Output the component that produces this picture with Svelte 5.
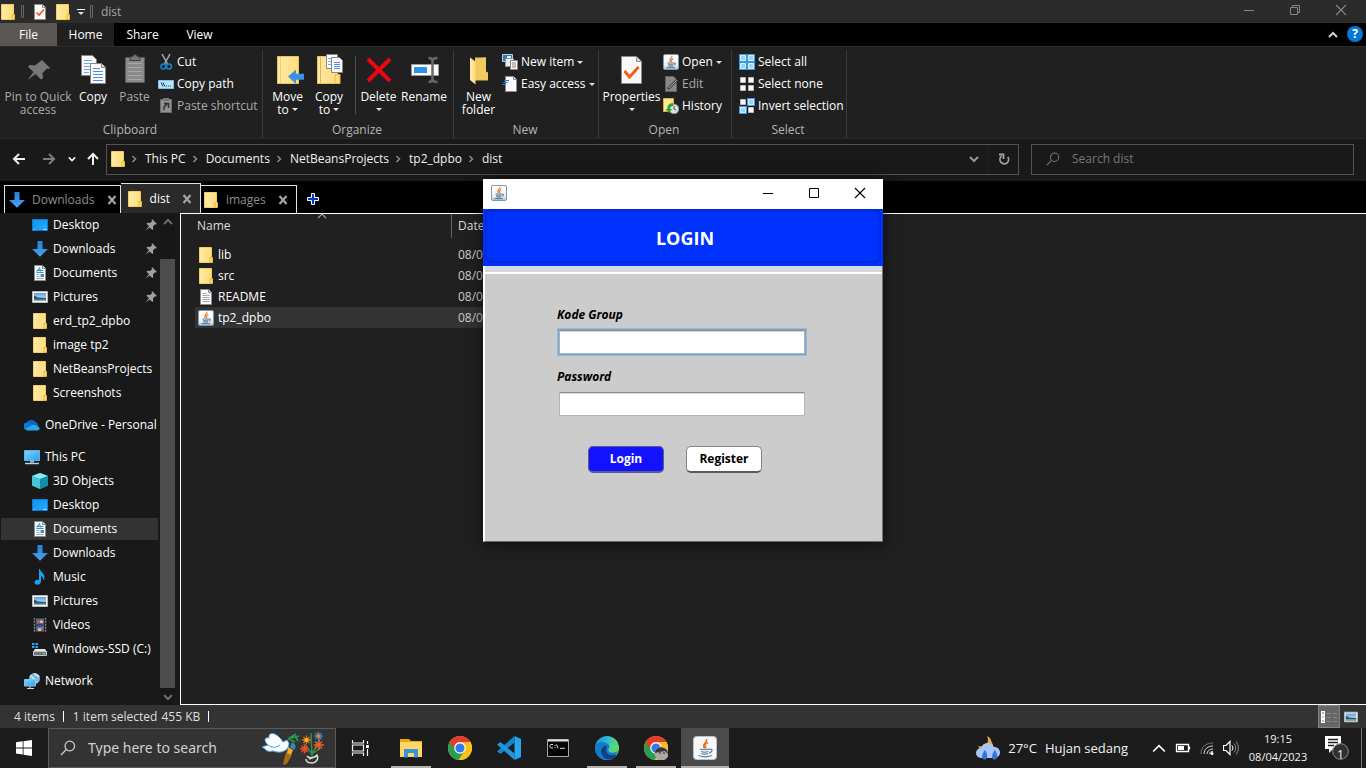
<script>
  const folder = '<path d="M1.5.5h12v15h-12z" fill="url(#gold)" stroke="#f3cf62"/><path d="M12 10.500h2.500v5H12z" fill="#ffdf7a" stroke="#e5b53a"/>';
  const docArt = '<path d="M2.500.5h8l3 3v12h-11z" fill="#fbfbfb" stroke="#8d8d8d"/><path d="M10.500.5v3h3" fill="#ddd" stroke="#8d8d8d"/>';
  const chromeArt = '<circle cx="12" cy="12" r="12" fill="#fbc116"/><path d="M12 12L1.600 6a12 12 0 0 0 9 17.900L17 14z" fill="#23a052"/><path d="M1.600 6a12 12 0 0 1 20.800 0H12a6 6 0 0 0-5.200 9z" fill="#e33b2e"/><path d="M12 6h10.400a12 12 0 0 1-11.800 17.900L17.200 15z" fill="#fbc116"/><circle cx="12" cy="12" r="5.800" fill="#fff"/><circle cx="12" cy="12" r="4.600" fill="#3279ea"/>';
  const javaArt = '<rect x=".5" y=".5" width="15" height="15" rx="1.500" fill="url(#steel)" stroke="#7f97ab"/><path d="M8.800 1.800c1.500 2.200-4 3-1.300 6M10.300 4.500C7.500 6 8.400 6.600 8.800 7.800" fill="none" stroke="#e8771f" stroke-width="1.100"/><path d="M4.500 9h6.500M11 9.300c2.500-.8 2 1.700 0 2M5 10.800h5.500M5.500 12h4.500M3.500 13.700h8.500" fill="none" stroke="#4a7396" stroke-width="1"/>';

  const icons = {
    folder: [16, folder],
    check: [16, docArt + '<path d="M4.500 8.500L7 11l5-5.500" fill="none" stroke="#f0581f" stroke-width="1.600"/>'],
    java: [16, javaArt],
    javaLarge: [24, '<rect x=".5" y=".5" width="23" height="23" rx="3" fill="#f7f7f7" stroke="#b5c4d0"/><path d="M13.500 3c1.500 3.500-5.500 4.500-2 9.500M15 6.500c-4.500 2-3 3.500-1.800 6" fill="none" stroke="#e8742a" stroke-width="1.500"/><path d="M7 13c2 1 7 1 9.500 0M16.500 13.500c3.500-1.500 3.500 2.500-.5 3.500M8 15.500c2 .8 5.500.8 7.500 0M8.500 17.500c2 .8 4.500.8 6.500 0M5.500 19.500c4 1.500 10 1.500 13.500 0" fill="none" stroke="#567d9f" stroke-width="1.200"/>'],
    down: [16, '<path d="M5.500 0h5v8H16l-8 7.700L0 8h5.500z" fill="url(#blueArrow)"/>'],
    desktop: [16, '<path d="M.5 2.500h15v11H.5z" fill="url(#desk)" stroke="#0d7fd3"/><path d="M1.500 12.500h1m9 0h3" stroke="#bfe4ff"/>'],
    document: [16, docArt + '<path d="M5 6.500l2.500-4 1 4M4.500 5.500h7M4.500 7.500h7" fill="none" stroke="#2196dc"/><path d="M4.500 9.500h3m-3 2h3m-3 2h7" stroke="#9aa6af"/><path d="M8.500 9h3.500v3H8.500z" fill="#3f91b9"/>'],
    pictures: [16, '<path d="M.5 2.500h15v11H.5z" fill="#f6f6f6" stroke="#b9b9b9"/><path d="M2 4h12v8H2z" fill="url(#sky)"/><path d="M2 6.500l4 2 8 .5v3H2z" fill="#2b5a60"/><path d="M2 10.500h12V12H2z" fill="#7fa7bd"/>'],
    onedrive: [16, '<path d="M3 12a3.400 3.400 0 0 1-.5-6.300A5.500 5.500 0 0 1 12 5.300a4 4 0 0 1 1 6.700z" fill="#0f62b8"/><path d="M2.500 5.700C6 5 8 7.500 10 8.500L3 13a3.500 3.500 0 0 1-.5-7.300z" fill="#0a78d4"/><path d="M1.500 11.500L9 7.800a8 8 0 0 1 6.500 3c.5 1.500-.7 2.700-2 2.700H3.500c-1 0-1.700-.8-2-2z" fill="#28a8ea"/>'],
    pc: [16, '<path d="M.5 1.500h15v10H.5z" fill="url(#screen)" stroke="#58b6e8"/><path d="M6 12h4v1.500H6z" fill="#a9c2d0"/><path d="M1 14.500h14" stroke="#c0d2dc" stroke-width="1.500"/>'],
    cube: [16, '<path d="M8 0l8 3v9.500L8 16l-8-3.500V3z" fill="#1ba7b9"/><path d="M8 0l8 3-8 3-8-3z" fill="#8beaf0"/><path d="M0 3l8 3v10l-8-3.500z" fill="#46c6d2"/><path d="M8 6l8-3v9.500L8 16z" fill="#118da5"/>'],
    music: [16, '<path d="M8 0c.5 3.500 5 4.500 4.500 8.500-.2 1.500-1 2.500-1.500 3 .5-3-.5-4-2-4.500V12c0 5-6.500 4.500-6.500 1.500C2.500 11 5 10.300 7 10.800V0z" fill="#18a0f4"/>'],
    video: [16, '<path d="M1 1h14v14H1z" fill="#2a2a2a"/><path d="M2.500 1v14M13.500 1v14" stroke="#9b9b9b" stroke-dasharray="1.500 1.500"/><path d="M4 1.500h8v6H4z" fill="#3f67ab"/><path d="M4 8.500h8v6H4z" fill="#4265b8"/><path d="M5 3h3v3H5z" fill="#dc513c"/><path d="M8 3.500h3v2.500H8zM6 11h3v3H6z" fill="#ebc343"/><path d="M9 10h2v3H9z" fill="#dc513c"/>'],
    drive: [16, '<path d="M0 2h2.500v2H0zM3.500 2H6v2H3.500zM0 5h2.500v2H0zM3.500 5H6v2H3.500z" fill="#18b1ee"/><path d="M3 8h10l2 3H1z" fill="#e4e6e7"/><path d="M1.500 10.500h13v4h-13z" fill="#70777b" stroke="#bfc5c8"/><path d="M11 12.500h2" stroke="#54f35d"/>'],
    network: [16, '<circle cx="10.500" cy="5.500" r="5.500" fill="#7fb8d8"/><path d="M6 3c3 0 2 2 4 3s2 3 1 4.500M11 0c-1 2 3 2 4 4" fill="none" stroke="#d7edf6" stroke-width="1.500"/><path d="M.5 6.500h11v6.500H.5z" fill="url(#screen)" stroke="#7bc9f2"/><path d="M3 15.500h7M6 13v2" stroke="#c4dae6"/>'],
    textfile: [16, docArt + '<path d="M4.500 4.500h4m-4 2h7m-7 2h7m-7 2h7m-7 2h7" stroke="#a7a7a7"/>'],
    pin: [12, '<path d="M7 0L12 5l-1 .6-1-.3-2 2.200.2 2.500-1 1L4.800 8.500.5 11.500 4 7.200 1.500 4.700l1-1L5 4l2.200-2.100L6.500 1z" fill="#9aa0a5"/>'],
    pinLarge: [32, '<path d="M19 5l8 8-1.500 1-1.500-.5-4.500 4.500.5 5-2 1.500-5.500-5.500-8 6 6-8L5 12l1.500-2 5.500.5L17 6.500z" transform="translate(1 1)" fill="#777"/>'],
    copy: [32, '<path d="M4.500 1.500h11l4 4v16h-15z" fill="#fafafa" stroke="#858585"/><path d="M7 6.500h8m-8 3h9m-9 3h9m-9 3h6m-6 3h5" stroke="#73a8ed"/><path d="M13.500 9.500h11l4 4v16h-15z" fill="#fafafa" stroke="#858585"/><path d="M24.500 9.500v4h4" fill="#ddd" stroke="#858585"/><path d="M16 14.500h7m-7 3h10m-10 3h10m-10 3h10m-10 3h10" stroke="#4b8fe8"/>'],
    paste: [32, '<path d="M6.500 3.500h19v25h-19z" fill="#8b8b8b" stroke="#5b5b5b"/><path d="M11 6.500V3l3-.5C14 0 18 0 18 2.500l3 .5v3.500z" fill="#767676" stroke="#3d3d3d"/><path d="M9 9.500h14m-14 4h14m-14 4h14m-14 4h14m-14 4h14" stroke="#a8a8a8"/>'],
    moveTo: [32, '<path d="M5.500 2.500h21v27h-21z" fill="url(#gold)" stroke="#e7c45f"/><path d="M8.500 3v26" stroke="#f2cd66"/><path d="M16 22.500l8-7v4.200h8v6h-8v4.300z" fill="#3892e6"/>'],
    copyTo: [32, '<path d="M4.500 2.500h20v27h-20z" fill="url(#gold)" stroke="#e7c45f"/><path d="M7.500 3v26M22 20.500h5v9h-5z" stroke="#e1ba4d" fill="#ffdf7a"/><path d="M13.500.5h11v14h-11z" fill="#fafafa" stroke="#888"/><path d="M15 4.500h6m-6 3h6m-6 3h6" stroke="#72a9ec"/><path d="M18.500 3.500h8l3 3v12h-11z" fill="#fafafa" stroke="#888"/><path d="M21 8.500h6m-6 2h6m-6 2h6m-6 2h6" stroke="#4b8fe8"/>'],
    remove: [32, '<path d="M5 5l22 22M27 5L5 27" stroke="#e90713" stroke-width="4"/>'],
    rename: [32, '<path d="M3.500 10.500h27v11h-27z" fill="#fbfbfb" stroke="#999"/><path d="M6 13h13v6H6z" fill="#2f91e8"/><path d="M20.500 4c3 0 4 1 4 3v18c0 2-1 3-4 3m9-24c-3 0-5 1-5 3m5 21c-3 0-5-1-5-3" fill="none" stroke="#686868" stroke-width="2.500"/>'],
    newFolder: [32, '<path d="M12 3.500h11v14l2 1v8H12z" fill="#e9bd51"/><path d="M12 4.500l9-1h2V18l2 1v6.500H12z" fill="#f0c95f"/><path d="M7 3.500l5.500 4v23L7 26z" fill="url(#gold)"/>'],
    properties: [32, '<path d="M5.500 2.500h15l5 5v22h-20z" fill="#f8f8f8" stroke="#8c8c8c"/><path d="M20.500 2.500v5h5" fill="#d4d4d4" stroke="#8c8c8c"/><path d="M8.500 17l5 6 9-10" fill="none" stroke="#f45b19" stroke-width="2.800"/>'],
    cut: [16, '<path d="M4 0l5.500 10M12 0L6.500 10" stroke="#a8adb1" stroke-width="1.500"/><circle cx="5.500" cy="12.500" r="2.500" fill="none" stroke="#1685ce" stroke-width="1.600"/><circle cx="11" cy="12.500" r="2.500" fill="none" stroke="#1685ce" stroke-width="1.600"/>'],
    path: [16, '<path d="M.5 4.500h15v8H.5z" fill="#b7e3fb" stroke="#83bfe7"/><path d="M3 6.500l2 4m0-4l2 4m1-.5h1m1 0h1m1 0h1" stroke="#203a50"/>'],
    shortcut: [16, '<path d="M2.500 1.500h11v13h-11z" fill="#909090" stroke="#6b6b6b"/><path d="M5 0h6v3H5z" fill="#777"/><path d="M6 12l0-3 3-3M6 5.500h4.500V10" fill="none" stroke="#303030" stroke-width="1.500"/>'],
    newItem: [16, '<path d="M.5.5h10v7H.5z" fill="#2f79a6" stroke="#bad4e3"/><path d="M5 2h4v3H5z" fill="#d6ecf6"/><path d="M3.500 4.500h8v8h-8z" fill="#e7eef3" stroke="#899"/><path d="M8.500 6.500h7v9h-7z" fill="#fafafa" stroke="#888"/><path d="M10 9h4m-4 2h4m-4 2h4" stroke="#a77"/>'],
    easy: [16, '<path d="M3.500.5h8l3 3v12h-11z" fill="#fbfbfb" stroke="#8d8d8d"/><path d="M11.500.5v3h3" fill="#ddd" stroke="#8d8d8d"/><path d="M2 4.500h5M1 6.500h4.500M0 8.500h4" stroke="#1f7ac9"/>'],
    edit: [16, '<path d="M2.500.5h8l3 3v12h-11z" fill="#888" stroke="#626262"/><path d="M5 13l9-9" stroke="#414141" stroke-width="2.500"/><path d="M6 12l8-8" stroke="#aaa"/>'],
    history: [16, '<path d="M.5.500h10v13H.5z" fill="url(#gold)" stroke="#d9af40"/><circle cx="11" cy="11" r="4.800" fill="#d9dddd" stroke="#899"/><path d="M11 8v3l2 1" fill="none" stroke="#555"/><path d="M10 5C6 5 4 8 4.500 11H2.500L6 15l3-4H7c0-2 1-3 3-3z" fill="#27a52f"/>'],
    all: [16, '<path d="M0 0h16v16H0z" fill="#3b98e1"/><path d="M1.500 1.500h5v5h-5zM9.500 1.500h5v5h-5zM1.500 9.500h5v5h-5zM9.500 9.500h5v5h-5z" fill="#9bd3fb" stroke="#d6efff"/>'],
    none: [16, '<path d="M1.500 1.500h5v5h-5zM9.500 1.500h5v5h-5zM1.500 9.500h5v5h-5zM9.500 9.500h5v5h-5z" fill="#fafafa" stroke="#bbb"/>'],
    invert: [16, '<path d="M8 0h8v8H8zM0 8h8v8H0z" fill="#3b98e1"/><path d="M1.500 1.500h5v5h-5zM9.500 9.500h5v5h-5z" fill="#fafafa" stroke="#bbb"/><path d="M9.500 1.500h5v5h-5zM1.500 9.500h5v5h-5z" fill="#9bd3fb" stroke="#d6efff"/>'],
    back: [14, '<path d="M13 7H2m5-5L2 7l5 5" fill="none" stroke="currentColor" stroke-width="2"/>'],
    forward: [14, '<path d="M1 7h11M7 2l5 5-5 5" fill="none" stroke="currentColor" stroke-width="2"/>'],
    up: [14, '<path d="M7 13V2M2 7l5-5 5 5" fill="none" stroke="currentColor" stroke-width="2"/>'],
    chevDown: [10, '<path d="M1 3l4 4 4-4" fill="none" stroke="currentColor" stroke-width="2"/>'],
    chevUp: [10, '<path d="M1 7l4-4 4 4" fill="none" stroke="currentColor" stroke-width="2"/>'],
    caretUp: [10, '<path d="M1 7l4-4 4 4" fill="none" stroke="currentColor" stroke-width="1.200"/>'],
    chevRight: [10, '<path d="M3.500 2l3 3-3 3" fill="none" stroke="#8b8b8b" stroke-width="1.500"/>'],
    refresh: [12, '<path d="M3.500 3.200a4.300 4.300 0 1 0 6.300.8M1 1.500h4.500V6" fill="none" stroke="#a0a0a0" stroke-width="1.800"/>'],
    search: [16, '<circle cx="9.800" cy="6" r="4.800" fill="none" stroke="currentColor" stroke-width="1.200"/><path d="M6.300 9.500L1 15" stroke="currentColor" stroke-width="1.200"/>'],
    cross: [10, '<path d="M1.500 1l7 8m0-8l-7 8" stroke="#a5a5a5" stroke-width="2.200"/>'],
    plus: [12, '<path d="M4.500.5h3v4h4v3h-4v4h-3v-4h-4v-3h4z" fill="#0c36c8" stroke="#fff"/>'],
    minimize: [12, '<path d="M1 6.500h10" stroke="currentColor"/>'],
    maximize: [12, '<path d="M1.500 1.500h9v9h-9z" fill="none" stroke="currentColor"/>'],
    restore: [12, '<path d="M1.500 3.500h7v7h-7zM3.500 3.500v-2h7v7h-2" fill="none" stroke="currentColor"/>'],
    close: [12, '<path d="M1 1l10 10M11 1L1 11" stroke="currentColor" stroke-width="1.100"/>'],
    details: [16, '<path d="M0 2h4v4H0zM0 6h4v4H0zM0 10h4v4H0z" fill="#fff"/><path d="M1.500 4h1" stroke="#333" stroke-width="1.500"/><path d="M1.500 8h1" stroke="#258ad6" stroke-width="1.500"/><path d="M1.500 12h1" stroke="#c52424" stroke-width="1.500"/><path d="M6 4.500h4m2 0h4m-10 4h4m2 0h4m-10 4h4m2 0h4" stroke="#8a8a8a"/>'],
    windows: [16, '<path d="M0 2.300L6.700 1.300v6.200H0zM7.500 1.200L16 0v7.500H7.500zM0 8.400h6.700v6.200L0 13.600zM7.500 8.400H16V16l-8.500-1.200z" fill="#fff"/>'],
    taskview: [18, '<path d="M1.500 1v3h11V1M1.500 17v-3h11v3M1.500 6v6h11V6zM16.500 2v3m0 5v7" fill="none" stroke="#f2f2f2" stroke-width="1.200"/><path d="M15 6h3v3h-3z" fill="#fff"/>'],
    explorer: [24, '<path d="M1 3h9l2 2h11v16H1z" fill="#e8a60f"/><path d="M1 6h22v15H1z" fill="#ffd765"/><path d="M5 13h14v8.500h-4V17H9v4.500H5z" fill="#3994df"/>'],
    chrome: [24, chromeArt],
    chromeProfile: [24, chromeArt + '<circle cx="17.500" cy="17.500" r="7" fill="#aaa8a5"/><path d="M11 17c0-8 13-7 13 1l-3-3-6 1z" fill="#3a3533"/><path d="M15.500 17h1m3 0h1" stroke="#222" stroke-width="2"/>'],
    code: [24, '<path d="M17.500 0L24 3v18l-6.500 3z" fill="#27a7f1"/><path d="M17.500 0v6.500L3.500 18 0 15.500z" fill="#1685cc"/><path d="M0 8.500L3.500 6l14 11.500V24z" fill="#2196de"/>'],
    terminal: [24, '<path d="M1.500 3.500h21v17h-21z" fill="#050505" stroke="#a0a7ab"/><path d="M2 4.500h20" stroke="#dce3e7" stroke-width="2"/><path d="M7 8.500H5c-1.500 0-1.500 3.500 0 3.500h2m2-3v.8m0 1.200v.8m1.500-3.500l1.500 4m2 0h5" fill="none" stroke="#d6d6d6"/>'],
    edge: [24, '<circle cx="12" cy="12" r="12" fill="url(#edge)"/><path d="M0 12C1 6 8 4 13 8c2 2 2 4 .5 5.500-.7 1 .5 3 4.500 3 2 0 4-1 5-2C20 24 9 27 3 20c-2-2-3-5-3-8z" fill="#177ac5"/><path d="M10 9.500c-7 4-4 12 3 14 4 .5 7-2 9-5-5 2-11 0-11-4.500 0-1.500.5-2.500 1-3.500z" fill="#123f86"/><path d="M13.500 13c1-1.500 1.500-3 0-5l5.500-1 4 6c-1 3-3 3.700-5 3.700-4 0-5-2-4.500-3.700z" fill="#55d67a" opacity=".75"/>'],
    weather: [24, '<path d="M11 0c3 6-1 12-9 10 2 4 7 6 12 4l3-5-3-7z" fill="#efa83a"/><path d="M5 22a5 5 0 0 1 0-10 7 7 0 0 1 13-1 5.500 5.500 0 0 1 1 11z" fill="#a9c6f6"/><path d="M9 14c-3.500 4-4 9.500-.5 9.500S12 18 9 14zM19 14c-3.500 4-4 9.500-.5 9.500S22 18 19 14z" fill="#2f74df"/>'],
    trayUp: [12, '<path d="M1 9l5-5 5 5" fill="none" stroke="#fff" stroke-width="1.400"/>'],
    battery: [16, '<path d="M1.500 4.500h12v7h-12zM14.500 6.500v3" fill="none" stroke="#fff" stroke-width="1.300"/><path d="M3 6h6v4H3z" fill="#fff"/>'],
    wifi: [14, '<path d="M1 13C1 6 6 2 13 2" fill="none" stroke="#777"/><path d="M4 13c0-5 4-8 9-8M7 13c0-3 3-5 6-5M9.500 13c0-1.500 1-2.500 3.500-2.500" fill="none" stroke="#ddd"/><circle cx="12" cy="12.500" r="1.500" fill="#fff"/>'],
    volume: [16, '<path d="M.5 5.500H3l4-4v13l-4-4H.5z" fill="none" stroke="#fff" stroke-width="1.200"/><path d="M9 5.500q2 2.500 0 5" fill="none" stroke="#fff"/><path d="M11 3.500q3.500 4.500 0 9M13 1.500q5 6.500 0 13" fill="none" stroke="#8b8b8b"/>'],
    notice: [24, '<path d="M0 0h16v13H8l-4 4v-4H0z" fill="#fff"/><path d="M3 3.500h10m-10 3h10m-10 3h6" stroke="#202020" stroke-width="1.300"/><circle cx="15.500" cy="15.500" r="7.800" fill="#303030" stroke="#8e8e8e"/>'],
  };

  const quick = [
    ['desktop', 'Desktop'], ['down', 'Downloads'], ['document', 'Documents'], ['pictures', 'Pictures'],
    ['folder', 'erd_tp2_dpbo'], ['folder', 'image tp2'], ['folder', 'NetBeansProjects'], ['folder', 'Screenshots'],
  ];
  const computer = [
    ['cube', '3D Objects'], ['desktop', 'Desktop'], ['document', 'Documents'], ['down', 'Downloads'], ['music', 'Music'],
    ['pictures', 'Pictures'], ['video', 'Videos'], ['drive', 'Windows-SSD (C:)'],
  ];
  const crumbs = ['This PC', 'Documents', 'NetBeansProjects', 'tp2_dpbo', 'dist'];
  const files = [['folder', 'lib'], ['folder', 'src'], ['textfile', 'README'], ['java', 'tp2_dpbo']];
  const apps = [
    ['explorer', 'File Explorer', 'open'], ['chrome', 'Google Chrome', ''], ['code', 'Visual Studio Code', ''], ['terminal', 'Command Prompt', ''],
    ['edge', 'Microsoft Edge', 'open'], ['chromeProfile', 'Google Chrome profile', 'open'], ['javaLarge', 'Java', 'open active'],
  ];

  let kode = $state('');
  let password = $state('');
</script>

{#snippet icon(name, size = icons[name][0])}
  <svg class="icon" width={size} height={size} viewBox="0 0 {icons[name][0]} {icons[name][0]}" aria-hidden="true">{@html icons[name][1]}</svg>
{/snippet}

{#snippet big(name, first, second = '', arrow = false, cls = '')}
  <button class="big {cls}">
    {@render icon(name)}
    <span>{first}</span>
    {#if second || arrow}<span class="second">{#if second}<span>{second}</span>{/if}{#if arrow}<i class="caret"></i>{/if}</span>{/if}
  </button>
{/snippet}

{#snippet small(name, label, arrow = false, cls = '')}
  <button class="small {cls}">{@render icon(name)}<span>{label}</span>{#if arrow}<i class="caret"></i>{/if}</button>
{/snippet}

{#snippet place(name, label, cls = '', pinned = false)}
  <a class="place {cls}" href="#{label}">{@render icon(name)}<span>{label}</span>{#if pinned}<span class="pin">{@render icon('pin')}</span>{/if}</a>
{/snippet}

<svg class="defs" width="0" height="0" aria-hidden="true">
  <defs>
    <linearGradient id="gold"><stop stop-color="#ffeaa8" /><stop offset="1" stop-color="#ffdc79" /></linearGradient>
    <linearGradient id="steel" x2="0" y2="1"><stop stop-color="#fff" /><stop offset=".7" stop-color="#eef3f6" /><stop offset="1" stop-color="#afc3d3" /></linearGradient>
    <linearGradient id="blueArrow" x2="0" y2="1"><stop stop-color="#2a7fd8" /><stop offset="1" stop-color="#4ba4f3" /></linearGradient>
    <linearGradient id="desk" x2="1" y2="1"><stop stop-color="#0a92f5" /><stop offset="1" stop-color="#2eaaff" /></linearGradient>
    <linearGradient id="sky" x2="0" y2="1"><stop stop-color="#5f9de4" /><stop offset="1" stop-color="#e5f3fc" /></linearGradient>
    <linearGradient id="screen" x2="1" y2="1"><stop stop-color="#83d2fb" /><stop offset="1" stop-color="#2c9ff0" /></linearGradient>
    <linearGradient id="edge" x2="1" y2="0"><stop stop-color="#1a8de0" /><stop offset=".6" stop-color="#35c1ce" /><stop offset="1" stop-color="#66df5a" /></linearGradient>
  </defs>
</svg>

<div class="screen">
  <header class="titlebar">
    {@render icon('folder')}<i class="bar"></i>{@render icon('check')}{@render icon('folder')}
    <span class="customize"><i class="caret"></i></span><i class="bar"></i><span class="title">dist</span>
    <div class="controls">
      <button aria-label="Minimize">{@render icon('minimize')}</button>
      <button aria-label="Restore">{@render icon('restore')}</button>
      <button aria-label="Close">{@render icon('close')}</button>
    </div>
  </header>

  <nav class="menu">
    <button class="file">File</button><button class="current">Home</button><button>Share</button><button>View</button>
    <button class="collapse" aria-label="Collapse ribbon">{@render icon('chevUp')}</button>
    <button class="help">?</button>
  </nav>

  <section class="ribbon">
    <div class="group clipboard">
      <div class="tools">
        {@render big('pinLarge', 'Pin to Quick', 'access', false, 'wide off')}
        {@render big('copy', 'Copy', '', false, 'narrow')}
        {@render big('paste', 'Paste', '', false, 'off')}
        <div class="stack">
          {@render small('cut', 'Cut')}
          {@render small('path', 'Copy path')}
          {@render small('shortcut', 'Paste shortcut', false, 'off')}
        </div>
      </div>
      <h2>Clipboard</h2>
    </div>
    <div class="group organize">
      <div class="tools">
        {@render big('moveTo', 'Move', 'to', true)}
        {@render big('copyTo', 'Copy', 'to', true, 'narrow')}
        <i class="divider"></i>
        {@render big('remove', 'Delete', '', true)}
        {@render big('rename', 'Rename', '', false, 'roomy')}
      </div>
      <h2>Organize</h2>
    </div>
    <div class="group new">
      <div class="tools">
        {@render big('newFolder', 'New', 'folder')}
        <div class="stack">
          {@render small('newItem', 'New item', true)}
          {@render small('easy', 'Easy access', true)}
        </div>
      </div>
      <h2>New</h2>
    </div>
    <div class="group open-group">
      <div class="tools">
        {@render big('properties', 'Properties', '', true, 'medium')}
        <div class="stack">
          {@render small('java', 'Open', true)}
          {@render small('edit', 'Edit', false, 'off')}
          {@render small('history', 'History')}
        </div>
      </div>
      <h2>Open</h2>
    </div>
    <div class="group select">
      <div class="tools">
        <div class="stack">
          {@render small('all', 'Select all')}
          {@render small('none', 'Select none')}
          {@render small('invert', 'Invert selection')}
        </div>
      </div>
      <h2>Select</h2>
    </div>
  </section>

  <section class="navigate">
    <div class="arrows">
      <button aria-label="Back">{@render icon('back')}</button>
      <button class="dim" aria-label="Forward">{@render icon('forward')}</button>
      <button class="recent" aria-label="Recent locations">{@render icon('chevDown', 8)}</button>
      <button class="upward" aria-label="Up">{@render icon('up')}</button>
    </div>
    <div class="address">
      {@render icon('folder')}
      {#each crumbs as crumb}{@render icon('chevRight')}<button>{crumb}</button>{/each}
      <button class="history" aria-label="Previous locations">{@render icon('chevDown')}</button>
      <button class="refresh" aria-label="Refresh">{@render icon('refresh')}</button>
    </div>
    <label class="find">{@render icon('search', 14)}<input type="search" placeholder="Search dist" aria-label="Search dist" /></label>
  </section>

  <div class="tabs">
    <div class="tab first">{@render icon('down')}<span>Downloads</span><button aria-label="Close Downloads">{@render icon('cross')}</button></div>
    <div class="tab chosen">{@render icon('folder')}<span>dist</span><button aria-label="Close dist">{@render icon('cross')}</button></div>
    <div class="tab">{@render icon('folder')}<span>images</span><button aria-label="Close images">{@render icon('cross')}</button></div>
    <button class="add" aria-label="New tab">{@render icon('plus')}</button>
  </div>

  <main class="content">
    <aside>
      <div class="tree">
        {#each quick as [name, label], i}{@render place(name, label, 'child', i < 4)}{/each}
        {@render place('onedrive', 'OneDrive - Personal', 'root')}
        {@render place('pc', 'This PC', 'root')}
        {#each computer as [name, label]}{@render place(name, label, label === 'Documents' ? 'child picked' : 'child')}{/each}
        {@render place('network', 'Network', 'root')}
      </div>
      <div class="scroll"><span>{@render icon('chevUp')}</span><i></i><span>{@render icon('chevDown')}</span></div>
    </aside>
    <section class="files">
      <span class="sort">{@render icon('caretUp')}</span>
      <table>
        <thead><tr><th class="name">Name</th><th>Date</th></tr></thead>
        <tbody>
          {#each files as [name, label]}
            <tr class:chosen={label === 'tp2_dpbo'}>
              <td><span class="entry">{@render icon(name)}{label}</span></td><td class="date">08/04/2023</td>
            </tr>
          {/each}
        </tbody>
      </table>
    </section>
  </main>

  <footer class="status">
    <span>4 items</span><i></i><span>1 item selected</span><span class="bytes">455 KB</span><i></i>
    <div class="views">
      <button class="on" aria-label="Details view">{@render icon('details')}</button>
      <button aria-label="Thumbnail view">{@render icon('pictures', 14)}</button>
    </div>
  </footer>

  <footer class="taskbar">
    <button class="start" aria-label="Start">{@render icon('windows')}</button>
    <label class="ask">
      {@render icon('search')}
      <input type="search" placeholder="Type here to search" aria-label="Type here to search" />
      <svg class="art" width="64" height="36" viewBox="0 0 64 36" aria-hidden="true">
        <path d="M1 17l6-2C2 10 4 7 8 8c-1-5 4-6 9-2 3 3 4 4 5 6l4-2 2 3c0 8-8 11-16 8-4 1-7 0-8-2z" fill="#fafdff" stroke="#4aa5e8" />
        <path d="M7 15c4 3 8 3 12 0" fill="none" stroke="#4aa5e8" />
        <path d="M27 9l8-5m-5 4l8-2m-10 3l6 3m0-6l3 5" fill="none" stroke="#2a9b46" stroke-width="1.500" />
        <path d="M25 22l6 3-4 7q-3 4-5 2z" fill="#a76c16" /><path d="M27 17l5 3-2 5-4-2z" fill="#f5ae24" /><path d="M29 17l2-5q6 3 2 8z" fill="#3b86bd" />
        <path d="M51 28L50 3m1 21l-8-10m8 10l9-17m-9 17l8-6" fill="none" stroke="#31904b" stroke-width="1.500" />
        <path d="M41 10h9m-4.500-4.500v9m-3-7.500l6 6m0-6l-6 6" stroke="#ef651e" stroke-width="1.300" />
        <path d="M53 6h9m-4.500-4.500v9m-3-7.500l6 6m0-6l-6 6" stroke="#2784c9" stroke-width="1.500" />
        <path d="M53 15h10m-5-5v10m-4-8.500l7 7m0-7l-7 7" stroke="#f0602b" stroke-width="1.500" />
        <path d="M39 19h9m-4.500-4.500v9m-3-7.500l6 6m0-6l-6 6" stroke="#e94d23" stroke-width="1.500" />
        <circle cx="45.500" cy="10" r="2" fill="#f5c12c" /><circle cx="57.500" cy="6" r="2" fill="#f17d24" />
        <path d="M46 26c2 3 7 2 10-1 2 4-1 8-5 8s-6-2-6-4m3 0l8-3" fill="none" stroke="#dadada" stroke-width="1.500" />
      </svg>
    </label>
    <button class="start" aria-label="Task view">{@render icon('taskview')}</button>
    <div class="apps">
      {#each apps as [name, label, state]}<button class={state} aria-label={label}>{@render icon(name, 24)}</button>{/each}
    </div>
    <button class="weather">{@render icon('weather')}<span>27°C</span><span>Hujan sedang</span></button>
    <div class="tray">{@render icon('trayUp', 14)}{@render icon('battery')}{@render icon('wifi')}{@render icon('volume')}</div>
    <time datetime="2023-04-08T19:15"><span>19:15</span><span>08/04/2023</span></time>
    <button class="notice" aria-label="1 notification">{@render icon('notice')}<b>1</b></button>
  </footer>

  <div class="dialog" role="dialog" aria-label="Login">
    <div class="caption">
      {@render icon('java')}
      <div class="controls">
        <button aria-label="Minimize dialog">{@render icon('minimize')}</button>
        <button aria-label="Maximize dialog">{@render icon('maximize')}</button>
        <button aria-label="Close dialog">{@render icon('close')}</button>
      </div>
    </div>
    <div class="banner"><h1>LOGIN</h1></div>
    <form onsubmit={(event) => event.preventDefault()}>
      <label for="kode">Kode Group</label>
      <input id="kode" class="focused" bind:value={kode} />
      <label for="password">Password</label>
      <input id="password" type="password" bind:value={password} />
      <div class="actions"><button class="primary">Login</button><button type="button">Register</button></div>
    </form>
  </div>
</div>

<style>
  :global(body) { margin: 0; background: #202020; }
  * { box-sizing: border-box; }
  button, input { font: inherit; color: inherit; background: none; border: 0; padding: 0; margin: 0; border-radius: 0; }
  button { display: flex; align-items: center; white-space: nowrap; }
  a { color: inherit; text-decoration: none; }
  input { min-width: 0; outline: 0; }
  h1, h2 { margin: 0; }
  .icon { display: block; flex: none; }
  .defs { position: absolute; }
  .screen { position: relative; min-height: 100vh; display: flex; flex-direction: column; font: 12px/16px "Open Sans", "Noto Sans", sans-serif; color: #fff; background: #202020; overflow: hidden; }
  .caret { display: inline-block; border: 3px solid transparent; border-top-color: #e0e0e0; border-bottom: 0; }

  .titlebar { display: flex; align-items: center; height: 23px; background: #2b2b2b; }
  .titlebar .bar { width: 3px; height: 13px; border: 1px solid #696969; margin: 0 8px 0 5px; border-radius: 1px; }
  .titlebar .icon + .icon { margin-left: 7px; }
  .customize { border-top: 1px solid #fff; height: 6px; display: flex; margin-left: 6px; }
  .customize .caret { margin: 2px 1px 0; }
  .title { color: #a5a5a5; }
  .controls { display: flex; margin-left: auto; }
  .controls button { width: 46px; justify-content: center; color: #858585; }
  .titlebar .controls { color: #858585; margin-top: -3px; margin-right: 2px; }

  .menu { display: flex; height: 23px; background: #000; }
  .menu button { width: 57px; justify-content: center; }
  .menu .file { background: #595653; }
  .menu .current { background: #202020; }
  .menu .collapse { width: 24px; margin-left: auto; color: #d0d0d0; }
  .menu .help { width: 16px; height: 16px; margin: 3px 3px 0 2px; border-radius: 8px; background: #0878d7; font-weight: bold; }

  .ribbon { display: flex; height: 93px; padding-top: 3px; border: solid #2b2b2b; border-width: 1px 0; background: #202020; }
  .group { display: flex; flex-direction: column; border-right: 1px solid #3a3a3a; }
  .tools { display: flex; height: 72px; padding-left: 3px; }
  .group h2 { padding-right: 2px; font-size: 12px; line-height: 16px; font-weight: normal; color: #b5b5b5; text-align: center; }
  .clipboard { width: 263px; }
  .organize { width: 191px; }
  .new { width: 145px; }
  .open-group { width: 133px; }
  .select { width: 115px; }
  .big { flex-direction: column; width: 43px; line-height: 13px; padding-top: 4px; }
  .big .icon { margin-bottom: 4px; }
  .big.wide { width: 70px; }
  .big.narrow { width: 40px; }
  .big.roomy { width: 48px; }
  .big.medium { width: 59px; }
  .second { display: flex; align-items: center; gap: 3px; min-height: 13px; }
  .off { color: #ababab; }
  .divider { width: 1px; margin: 6px 1px 8px 6px; background: #505050; }
  .stack { margin-left: 2px; padding-top: 1px; }
  .select .stack { margin-left: 4px; }
  .small { height: 22px; gap: 3px; }

  .navigate { display: flex; align-items: center; height: 42px; padding: 0 12px 2px 12px; background: #191919; color: #f0f0f0; }
  .arrows { display: flex; align-items: center; width: 94px; }
  .arrows button { margin-right: 16px; }
  .arrows .dim { margin-right: 12px; }
  .arrows .recent { margin-right: 10px; }
  .arrows .upward { margin-right: 0; }
  .dim { color: #7d7d7d; }
  .address { flex: 908; height: 31px; display: flex; align-items: center; border: 1px solid #535353; padding-left: 3px; }
  .address > .icon + .icon { margin-left: 3px; }
  .address button + .icon { margin-left: 4px; }
  .address .icon + button { margin-left: 6px; }
  .address .history { margin: 0 9px 0 auto; color: #999; }
  .address .icon + .history, .address button + .history { margin-left: auto; }
  .address .refresh { width: 30px; align-self: stretch; justify-content: center; border-left: 1px solid #202020; }
  .find { flex: 307; height: 31px; margin-left: 12px; display: flex; align-items: center; gap: 12px; padding-left: 14px; border: 1px solid #535353; color: #777; }
  input::placeholder { color: inherit; opacity: 1; }

  .tabs { display: flex; align-items: flex-end; height: 32px; padding-left: 4px; background: #000; }
  .tab { display: flex; align-items: center; height: 28px; padding: 0 8px 0 2px; border: 1px solid #e2e2e2; border-width: 1px 1px 0 0; color: #8d8d8d; }
  .tab.first { border-left-width: 1px; padding: 0 3px 0 4px; }
  .tab.chosen { height: 30px; background: #2b2b2b; color: #fff; padding-left: 6px; }
  .tab span { margin: 0 12px 0 7px; }
  .add { height: 28px; margin-left: 10px; }

  .content { flex: 1; display: flex; min-height: 0; }
  aside { width: 180px; display: flex; background: #191919; }
  .tree { width: 160px; padding-bottom: 11px; }
  .place { display: flex; align-items: center; gap: 5px; height: 22px; margin: 1px 2px 2px 1px; padding-left: 31px; white-space: nowrap; }
  .place.root { padding-left: 23px; margin-top: 10px; margin-bottom: 2px; }
  .pin { margin-left: auto; padding-right: 1px; }
  .picked { background: #333; }
  .scroll { width: 15px; display: flex; flex-direction: column; background: #171717; color: #6c6c6c; }
  .scroll span { height: 17px; display: grid; place-items: center; }
  .scroll i { flex: 1; margin-top: 29px; background: #4d4d4d; }
  .files { position: relative; flex: 1; border: solid #fff; border-width: 1px 0 1px 1px; background: #202020; }
  .sort { position: absolute; left: 136px; top: -3px; color: #a0a0a0; }
  table { border-collapse: separate; border-spacing: 0; table-layout: fixed; width: 660px; margin-left: 14px; text-align: left; }
  th { height: 24px; padding: 0 0 0 6px; font-weight: normal; color: #ddd; }
  th.name { width: 257px; padding-left: 2px; border-right: 1px solid #636363; }
  tbody::before { content: ""; display: block; height: 6px; }
  td { height: 21px; padding: 0; }
  .entry { display: flex; align-items: center; gap: 4px; padding-left: 3px; }
  td.date { padding-left: 6px; color: #ccc; }
  tr.chosen { background: #333; }

  .status { display: flex; align-items: center; height: 23px; padding-left: 14px; background: #333; color: #dedede; }
  .status i { width: 1px; height: 11px; margin: 0 9px 0 8px; background: #fff; }
  .bytes { margin-left: 4px; }
  .views { display: flex; align-self: stretch; margin-left: auto; padding-right: 8px; gap: 4px; }
  .views .on { width: 22px; justify-content: center; background: #666; border: 1px solid #858585; }

  .taskbar { display: flex; align-items: stretch; height: 40px; background: #1c1c1c; font-size: 14px; color: #f4f4f4; }
  .start { width: 48px; justify-content: center; }
  .ask { width: 288px; display: flex; align-items: center; gap: 12px; padding-left: 11px; border: 1px solid #5a5a5a; background: #333; color: #d0d0d0; font-family: "Noto Sans", sans-serif; }
  .ask input { flex: 1; }
  .art { flex: none; margin-right: 10px; }
  .apps { display: flex; gap: 1px; margin-left: 3px; }
  .apps button { width: 48px; justify-content: center; border: solid transparent; border-width: 0 4px; }
  .apps .open { background: linear-gradient(#b5b2ae, #b5b2ae) bottom / 100% 2px no-repeat content-box; }
  .apps .active { border-width: 0; background: linear-gradient(#b5b2ae, #b5b2ae) bottom / 100% 2px no-repeat, #4b4b4b; }
  .weather { margin-left: auto; gap: 8px; margin-right: 24px; font-size: 13px; }
  .tray { display: flex; align-items: center; gap: 9px; }
  time { width: 78px; display: flex; flex-direction: column; align-items: center; font-size: 11px; line-height: 18px; padding-top: 2px; margin-right: 8px; }
  .notice { position: relative; width: 37px; border-right: 1px solid #777; margin-right: 4px; }
  .notice b { position: absolute; left: 12px; top: 17px; font-size: 12px; font-weight: normal; line-height: 20px; }

  .dialog { position: absolute; top: 179px; left: 50%; width: 400px; margin-left: -200px; background: #ccc; color: #000; box-shadow: 0 2px 14px #0009; font-family: "Noto Sans", sans-serif; }
  .caption { display: flex; align-items: center; height: 30px; padding: 0 0 2px 8px; background: #fff; }
  .caption .controls button { color: #000; }
  .banner { height: 57px; padding: 0 2px 3px; background: #0032ff; }
  .banner h1 { display: grid; place-items: center; height: 54px; padding-top: 4px; padding-left: 4px; border-radius: 6px; box-shadow: inset 0 0 4px #001a9e; color: #fff; font-size: 18px; line-height: 24px; font-family: "Open Sans", sans-serif; }
  form { display: flex; flex-direction: column; height: 276px; padding: 41px 77px 0 72px; border: solid; border-width: 0 1px 1px 2px; border-color: #fff #777 #666 #fff; background: linear-gradient(#d6d9df 6px, #fff 6px, #fff 8px, #ccc 8px); font-weight: bold; }
  form label { font-style: italic; }
  form input { height: 24px; margin: 7px 0 0 2px; background: #fff; border: 1px solid #b5b5b5; border-top-color: #8d8d8d; box-shadow: inset 0 1px #d7d7d7; }
  form .focused { box-shadow: inset 0 1px #d7d7d7, 0 0 0 1px #73a4d1, 0 0 0 2px #9dbbd6; margin-bottom: 15px; }
  .actions { display: flex; gap: 22px; margin: 30px 0 0 31px; font-family: "Open Sans", sans-serif; }
  .actions button { width: 76px; height: 27px; justify-content: center; border: 1px solid #818489; border-bottom: 2px solid #555b63; border-radius: 5px; background: #fff; }
  .actions .primary { background: #1212ff; border-color: #5a5a96; color: #fff; }
</style>
